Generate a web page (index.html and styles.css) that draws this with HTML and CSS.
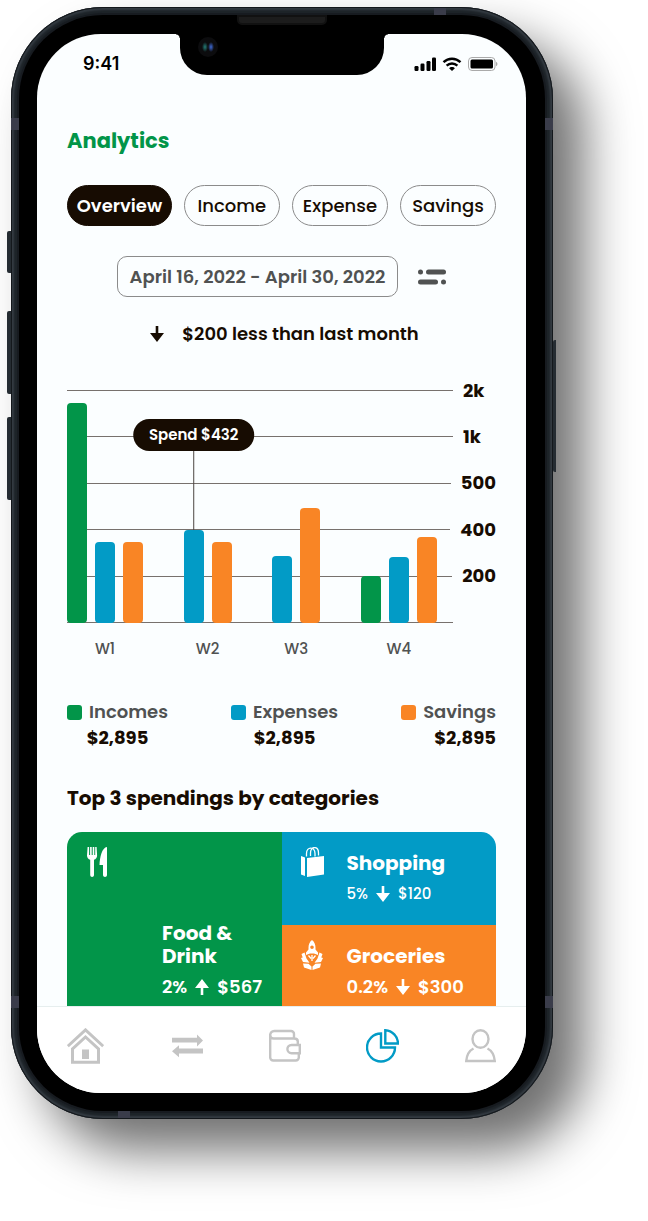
FILE: index.html
```html
<!DOCTYPE html>
<html lang="en">
<head>
<meta charset="utf-8">
<meta name="viewport" content="width=device-width, initial-scale=1">
<title>Analytics</title>
<link rel="stylesheet" href="styles.css">
</head>
<body>
<svg class="defs" aria-hidden="true">
  <symbol id="arrow-down" viewBox="0 0 14 16"><path d="M5.700 0h2.600v7H14L7 16 0 7h5.700z"/></symbol>
  <symbol id="arrow-up" viewBox="0 0 14 16"><path d="M5.700 16h2.600V9H14L7 0 0 9h5.700z"/></symbol>
</svg>
<div class="phone">
  <span class="key key-mute"></span>
  <span class="key key-up"></span>
  <span class="key key-down"></span>
  <span class="key key-power"></span>
  <div class="bezel">
    <span class="speaker"></span>
    <div class="screen">
      <div class="notch"><span class="camera"></span></div>
      <header class="status">
        <time class="clock">9:41</time>
        <svg class="status-icons" viewBox="0 0 84 16" aria-hidden="true">
          <rect x="0.500" y="10" width="4" height="5" rx="1.200"/>
          <rect x="6.500" y="7.500" width="4" height="7.500" rx="1.200"/>
          <rect x="12.500" y="5" width="4" height="10" rx="1.200"/>
          <rect x="18" y="1.500" width="4" height="13.500" rx="1.200"/>
          <path d="M38 11c1.300 0 2.200.5 2.900 1.200L38 15l-2.900-2.800C35.800 11.500 36.700 11 38 11z"/>
          <path class="wave" d="M29.500 6.200c4.900-4.700 12.100-4.700 17 0M32.600 9.600c3.100-2.900 7.700-2.900 10.800 0"/>
          <rect class="cell" x="54.500" y="1.500" width="26.500" height="13" rx="3.500"/>
          <rect x="56.500" y="3.500" width="22.500" height="9" rx="1.500"/>
          <path class="cap" d="M82 5.800c2 .8 2 3.600 0 4.400z"/>
        </svg>
      </header>

      <main class="content">
        <h1 class="title">Analytics</h1>
        <div class="tabs">
          <button class="tab tab-active" type="button">Overview</button>
          <button class="tab" type="button">Income</button>
          <button class="tab" type="button">Expense</button>
          <button class="tab" type="button">Savings</button>
        </div>
        <div class="period">
          <button class="range" type="button">April 16, 2022 - April 30, 2022</button>
          <button class="filter" type="button" aria-label="Filter">
            <svg viewBox="0 0 28 16" width="28" height="16"><circle cx="2.500" cy="3" r="2.500"/><rect x="8" y="0.500" width="20" height="5" rx="2.500"/><rect x="0" y="10.500" width="20" height="5" rx="2.500"/><circle cx="25.500" cy="13" r="2.500"/></svg>
          </button>
        </div>
        <p class="change"><svg class="arrow"><use href="#arrow-down"/></svg>$200 less than last month</p>

        <section class="chart" aria-label="Weekly chart">
          <div class="grid">
            <div class="line"><span class="mark">2k</span></div>
            <div class="line"><span class="mark">1k</span></div>
            <div class="line"><span class="mark">500</span></div>
            <div class="line"><span class="mark">400</span></div>
            <div class="line"><span class="mark">200</span></div>
            <div class="line"><span class="mark"></span></div>
          </div>
          <div class="weeks">
            <div class="week">
              <div class="bars"><span class="bar green" style="height:94.4%"></span><span class="bar blue" style="height:34.800%"></span><span class="bar orange" style="height:34.800%"></span></div>
              <span class="week-name">W1</span>
            </div>
            <div class="week">
              <div class="bars"><span class="bar blue" style="height:40%"><span class="tip">Spend $432</span></span><span class="bar orange" style="height:34.800%"></span></div>
              <span class="week-name">W2</span>
            </div>
            <div class="week">
              <div class="bars"><span class="bar blue" style="height:28.800%"></span><span class="bar orange" style="height:49.400%"></span></div>
              <span class="week-name">W3</span>
            </div>
            <div class="week">
              <div class="bars"><span class="bar green" style="height:20.200%"></span><span class="bar blue" style="height:28.300%"></span><span class="bar orange" style="height:36.900%"></span></div>
              <span class="week-name">W4</span>
            </div>
          </div>
        </section>

        <dl class="legend">
          <div class="entry"><dt class="kind"><span class="swatch green"></span>Incomes</dt><dd class="sum">$2,895</dd></div>
          <div class="entry"><dt class="kind"><span class="swatch blue"></span>Expenses</dt><dd class="sum">$2,895</dd></div>
          <div class="entry entry-end"><dt class="kind"><span class="swatch orange"></span>Savings</dt><dd class="sum">$2,895</dd></div>
        </dl>

        <h2 class="subtitle">Top 3 spendings by categories</h2>
        <div class="cards">
          <article class="card card-tall green">
            <svg class="card-icon" viewBox="0 0 24 30" aria-hidden="true"><path d="M2.600 0h1.500v8h1V0h1.600v8h1V0h1.600v8h.9V0h1.400l.5 8.500c0 2.300-1.300 3.700-3.100 4.300V28c0 2.600-3.800 2.600-3.800 0V12.800C3.400 12.200 2 10.800 2 8.500zM22 0v28c0 2.600-4 2.600-4 0V18h-3.500C14.800 10 17 .5 22 0z"/></svg>
            <div class="card-text"><h3 class="card-name">Food &amp; Drink</h3><p class="trend">2%<svg class="arrow"><use href="#arrow-up"/></svg>$567</p></div>
          </article>
          <article class="card blue">
            <svg class="card-icon" viewBox="0 0 24 30" aria-hidden="true"><path d="M1 9l4 1.500V29l-4-1.500zM7 11l17-2v18.500L7 30z"/><path class="stroke" d="M6.500 9.500V6.500c0-7 8.500-7.500 8.500 0v3M10.500 9V6c0-7.500 8-7 8 0v2.500"/></svg>
            <div class="card-text"><h3 class="card-name">Shopping</h3><p class="trend trend-small">5%<svg class="arrow"><use href="#arrow-down"/></svg>$120</p></div>
          </article>
          <article class="card orange">
            <svg class="card-icon" viewBox="0 0 24 30" aria-hidden="true"><path fill-rule="evenodd" d="M12 0c2.500 2 3.500 4.700 3.500 7.500v2l2.500 3V15l-4-1.500h-4L6 15v-2.500l2.500-3v-2C8.500 4.700 9.500 2 12 0zm0 5.500a1.800 1.800 0 1 0 0 3.600 1.800 1.800 0 0 0 0-3.600z"/><path d="M4.500 12.500L1.500 14l1.200 3.500L1 18l2 4 6.500.8-3-4.300zM19.500 12.500l3 1.500-1.200 3.500L23 18l-2 4-6.500.8 3-4.300z"/><path d="M3 23.500l5.500.3 3 2.700V30L4 27.500zM21 23.500l-5.500.3-3 2.700V30l7.500-2.500z"/><path class="stroke" d="M8.500 15.500l2.500 3M15.500 15.500l-2.500 3M12 15v6"/></svg>
            <div class="card-text"><h3 class="card-name">Groceries</h3><p class="trend">0.2%<svg class="arrow"><use href="#arrow-down"/></svg>$300</p></div>
          </article>
        </div>
      </main>

      <nav class="nav">
        <a class="nav-link" href="#home" aria-label="Home"><svg class="heavy" width="37" height="36" viewBox="0 0 37 36"><path d="M.8 18.200L18.500 1.900l17.700 16.300M5.500 34.300V21l13-12 13 12v13.300z"/><path class="solid" d="M15 21.500h7V31h-7z"/></svg></a>
        <a class="nav-link" href="#transfers" aria-label="Transfers"><svg width="33" height="36" viewBox="0 0 33 36"><path class="solid" d="M2 9.800h25V6.500l6 6-6 6v-3.900H2zM33 20.600H9v-3.300l-7 6 7 6v-3.900h24z"/></svg></a>
        <a class="nav-link" href="#wallet" aria-label="Wallet"><svg width="32" height="36" viewBox="0 0 32 36"><path d="M1.200 6v23.500a3 3 0 0 0 3 3h22.600a3 3 0 0 0 3-3v-4M1.200 7a4 4 0 0 1 4-4H22a3 3 0 0 1 3 3v4.500H4.500c-2 0-3.300-1.500-3.300-3.500M25 10.500c2.500 0 3.800 1 3.800 3V17M22.500 17h8.300v8.200h-8.300a4.100 4.100 0 0 1 0-8.200z"/></svg></a>
        <a class="nav-link nav-current" href="#analytics" aria-label="Analytics" aria-current="page"><svg width="33" height="36" viewBox="0 0 33 36"><path d="M15 5.500v14h14A14 14 0 1 1 15 5.500zM19.300 2.200A13.500 13.500 0 0 1 32 15.500H19.300z"/></svg></a>
        <a class="nav-link" href="#profile" aria-label="Profile"><svg width="31" height="36" viewBox="0 0 31 36"><ellipse cx="15.500" cy="11" rx="8" ry="8.800"/><path d="M8.500 20.500C4 22.800 1.700 27.500 1.200 33h28.600c-.5-5.500-2.800-10.200-7.300-12.500"/></svg></a>
      </nav>
    </div>
  </div>
  <span class="band band-top"></span>
  <span class="band band-bottom"></span>
  <span class="band band-left"></span>
  <span class="band band-right"></span>
  <span class="band band-left band-low"></span>
  <span class="band band-right band-low"></span>
</div>
</body>
</html>
```

FILE: styles.css
```css
* { box-sizing: border-box; }

body {
  margin: 0;
  padding: 7px 95px 101px 11px;
  background: #fff;
  color: #170c02;
  font-family: Poppins, Inter, "Liberation Sans", sans-serif;
  font-size: 18px;
  font-weight: 600;
  line-height: 24px;
}

h1, h2, h3, p, dl, dd { margin: 0; }
button { font: inherit; color: inherit; background: none; padding: 0; border: 0; }
svg { display: block; flex: none; }
.defs { position: absolute; width: 0; height: 0; }

.green { background: #029549; }
.blue { background: #029bc6; }
.orange { background: #f98525; }

/* Device shell */
.phone {
  position: relative;
  padding: 8px;
  border-radius: 92px;
  background: #1d2328;
  box-shadow: inset 0 0 0 1px #14181c, inset 0 0 2px 3px #343b42, 31px 32px 50px rgba(0, 0, 0, 0.56);
}
.bezel {
  position: relative;
  padding: 19px 19px 18px 18px;
  border-radius: 84px;
  background: #000;
  box-shadow: 0 0 0 2px #171b20;
}
.screen {
  position: relative;
  overflow: hidden;
  border-radius: 64px;
  background: #fbfeff;
}
.key { position: absolute; left: -4px; width: 4px; height: 83px; border-radius: 2px 0 0 2px; background: #252c32; }
.key-mute { top: 224px; height: 42px; }
.key-up { top: 304px; }
.key-down { top: 410px; }
.key-power { top: 333px; left: auto; right: -3px; width: 3px; height: 132px; }
.band { position: absolute; width: 8px; height: 12px; background: #3a3c4a; }
.band-top, .band-bottom { width: 12px; height: 7px; }
.band-top { top: 1px; right: 107px; }
.band-bottom { bottom: 1px; left: 107px; }
.band-left { left: 0; top: 111px; }
.band-right { right: 0; top: 111px; }
.band-low { top: auto; bottom: 111px; }
.speaker {
  position: absolute;
  top: 0;
  left: 50%;
  width: 90px;
  height: 10px;
  transform: translateX(-50%);
  border: 2px solid #111;
  border-radius: 0 0 5px 5px;
  background: #1c1c1c;
}
.notch {
  position: absolute;
  top: 0;
  left: 50%;
  width: 204px;
  height: 41px;
  transform: translateX(-50%);
  border-radius: 0 0 27px 27px;
  background: #000;
}
.notch::before, .notch::after {
  content: "";
  position: absolute;
  top: 0;
  width: 4px;
  height: 4px;
}
.notch::before { right: 100%; background: radial-gradient(circle at 0 100%, transparent 3px, #000 4px); }
.notch::after { left: 100%; background: radial-gradient(circle at 100% 100%, transparent 3px, #000 4px); }
.camera {
  position: absolute;
  top: 3px;
  left: 18px;
  width: 20px;
  height: 20px;
  border-radius: 50%;
  background:
    radial-gradient(ellipse 3px 5px at 13px 10px, #3558b0 20%, transparent),
    radial-gradient(ellipse 3px 5px at 7px 10px, #1f6662 20%, transparent),
    #0c0c0e;
}

/* Status bar */
.status { display: flex; align-items: center; justify-content: space-between; height: 60px; padding: 0 28px 0 46px; }
.clock { color: #000; font-family: Inter, "Liberation Sans", sans-serif; }
.status-icons { width: 84px; height: 16px; fill: #000; }
.status-icons .wave { fill: none; stroke: #000; stroke-width: 2.4; }
.status-icons .cell { fill: none; stroke: #aaa; }
.status-icons .cap { fill: #aaa; }

/* Page */
.content { padding: 31px 30px 0; }
.title { color: #029549; font-size: 21px; line-height: 32px; font-weight: 700; }
.tabs { display: flex; gap: 12px; margin-top: 28px; }
.tab { flex: 96 1 0; height: 41px; border: 1px solid #8b8b8b; border-radius: 21px; font-weight: 500; }
.tab-active { flex-grow: 105; border-color: #170c02; background: #170c02; color: #fff; font-weight: 600; }
.period { display: flex; align-items: center; justify-content: center; gap: 20px; margin-top: 30px; }
.range { height: 41px; padding: 0 12px; border: 1px solid #8b8b8b; border-radius: 10px; color: #505252; }
.filter svg { fill: #505252; }
.change { display: flex; align-items: center; justify-content: center; gap: 18px; margin-top: 25px; padding-left: 6px; }
.arrow { width: 14px; height: 16px; fill: currentColor; }

/* Chart */
.chart { position: relative; margin-top: 44px; padding-bottom: 38px; }
.grid { display: flex; flex-direction: column; justify-content: space-between; height: 233px; }
.line { display: flex; align-items: center; gap: 10px; height: 1px; font-weight: 700; }
.line::before { content: ""; flex: 1; height: 1px; background: #77716d; }
.mark { min-width: 33px; }
.weeks { position: absolute; top: 0; left: 0; right: 59px; display: flex; justify-content: space-between; }
.week { display: flex; flex-direction: column; align-items: center; gap: 14px; }
.bars { display: flex; align-items: flex-end; gap: 8px; height: 233px; }
.bar { position: relative; width: 20px; border-radius: 4px; }
.week-name { color: #505252; font-size: 15px; font-weight: 500; }
.tip {
  position: absolute;
  bottom: 100%;
  left: 50%;
  margin-bottom: 79px;
  padding: 4px 16px;
  transform: translateX(-50%);
  border-radius: 16px;
  background: #170c02;
  color: #fff;
  font-size: 15px;
  white-space: nowrap;
}
.tip::after { content: ""; position: absolute; top: 100%; left: 50%; width: 1px; height: 79px; background: #4c4642; }

/* Legend */
.legend { display: flex; justify-content: space-between; margin-top: 38px; line-height: 26px; }
.entry { display: flex; flex-direction: column; align-items: center; }
.entry-end { align-items: flex-end; }
.kind { display: flex; align-items: center; gap: 7px; color: #505252; }
.swatch { width: 15px; height: 15px; border-radius: 3px; }
.sum { font-weight: 700; }

/* Categories */
.subtitle { margin-top: 33px; font-size: 20px; line-height: 28px; font-weight: 700; }
.cards {
  display: grid;
  grid-template: 93px 81px / 1fr 1fr;
  margin-top: 20px;
  overflow: hidden;
  border-radius: 15px 15px 0 0;
  color: #fff;
}
.card { display: flex; gap: 23px; padding: 15px 18px 0; }
.card-tall { grid-row: span 2; gap: 53px; padding-bottom: 7px; }
.card-tall .card-text { align-self: flex-end; }
.card-icon { width: 24px; height: 30px; fill: #fff; }
.card-icon .stroke { fill: none; stroke: #fff; stroke-width: 1.3; }
.card-text { padding-top: 5px; }
.card-name { font-size: 20px; line-height: 23px; font-weight: 700; }
.trend { display: flex; align-items: center; gap: 8px; margin-top: 7px; }
.trend-small { font-size: 15px; font-weight: 500; }

/* Bottom navigation */
.nav { display: flex; justify-content: space-between; padding: 21px 30px 29px; border-top: 1px solid #e6eeee; background: #fff; }
.nav-link { color: #c4c4c4; }
.nav-link svg { fill: none; stroke: currentColor; stroke-width: 2.4; }
.nav-link .heavy { stroke-width: 3; }
.nav-link .solid { fill: currentColor; stroke: none; }
.nav-current { color: #029bc6; }
```
